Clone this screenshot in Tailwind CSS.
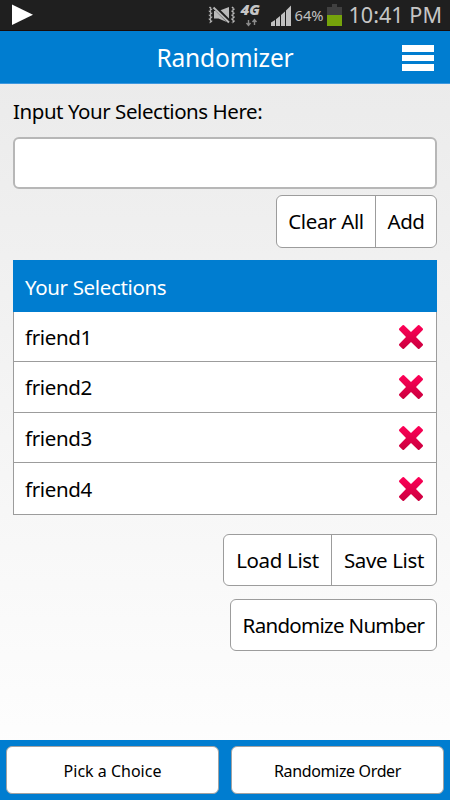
<!DOCTYPE html>
<html lang="en">
<head>
<meta charset="utf-8">
<title>Randomizer</title>
<script src="https://cdn.jsdelivr.net/npm/@tailwindcss/browser@4"></script>
</head>
<body class="w-[450px] h-[800px] overflow-hidden flex flex-col font-['Noto_Sans',sans-serif] text-black text-[20.5px] leading-[26px] tracking-[-0.35px] bg-linear-to-b from-[#e9e9e9] to-white">
<div class="h-[31px] shrink-0 bg-[#1f1f1f] border-b border-[#190b08] flex items-start tracking-normal">
  <svg class="w-[450px] h-[30px] overflow-visible" viewBox="0 0 450 30">
    <path d="M12 4.500V25L33 14.700z" fill="#fff"/>
    <path d="M209.500 7l2 2-2 2 2 2-2 2 2 2-2 2 2 2-2 2M232 7l2 2-2 2 2 2-2 2 2 2-2 2 2 2-2 2" fill="none" stroke="#b9b9b9" stroke-width="1.500" stroke-dasharray="2.200 .6"/>
    <path d="M214 11h4.500l10.500-4v16l-10.500-4.500H214z" fill="#b9b9b9"/>
    <path d="M214 6.500L230 22.500" stroke="#1f1f1f" stroke-width="4"/>
    <path d="M213.500 7.500L229 22.500" stroke="#b9b9b9" stroke-width="1.900"/>
    <text x="240.500" y="14.500" font-family="Open Sans, sans-serif" font-size="14.500" font-weight="800" font-style="italic" fill="#c6c6c6" textLength="19.500" lengthAdjust="spacingAndGlyphs">4G</text>
    <path d="M248.500 20v5M246.500 23l2 2.500 2-2.500M254.500 25v-5M252.500 22l2-2.500 2 2.500" fill="none" stroke="#8b8b8b" stroke-width="1.400"/>
    <path d="M271 22.500l4-2.500v6h-4zM276 19.300l4-3.300v10h-4zM281 15l4-3.500V26h-4zM286 10.500l5-5V26h-5z" fill="#c1c1c1"/>
    <text x="294.500" y="21" font-family="Noto Sans, sans-serif" font-size="14.500" fill="#c1c1c1" textLength="29" lengthAdjust="spacingAndGlyphs">64%</text>
    <path d="M332 4h5v3h5v8h-15V7h5z" fill="#404040"/>
    <path d="M327 15h15v11h-15z" fill="#75a30b"/>
    <text x="348.500" y="22.500" font-family="Noto Sans, sans-serif" font-size="21" fill="#c6c6c6" textLength="93.500" lengthAdjust="spacingAndGlyphs">10:41 PM</text>
  </svg>
</div>
<header class="h-[53px] shrink-0 bg-[#007dd0] border-b border-[#3d98df] text-white grid grid-cols-[50px_1fr_50px] items-center">
  <span></span>
  <h1 class="text-center text-[24.5px] tracking-[-0.150px] pt-[2px]">Randomizer</h1>
  <button class="flex flex-col gap-[3px] w-8 ml-[2px] pt-px" aria-label="Menu"><span class="h-[7px] w-8 bg-white"></span><span class="h-[6px] w-8 bg-white"></span><span class="h-[7px] w-8 bg-white"></span></button>
</header>
<main class="flex-1 px-[13px] pt-[14px] flex flex-col items-end">
  <label for="selection" class="self-start h-[39px] tracking-[-0.450px]">Input Your Selections Here:</label>
  <input id="selection" class="block w-full h-[52px] shrink-0 rounded-[6px] border-2 border-[#b7b7b7] bg-white px-3">
  <div class="mt-[6px] h-[53px] flex bg-white border border-[#9c9c9c] rounded-[6px] overflow-hidden">
    <button class="w-[99px] border-r border-[#9c9c9c] pb-px">Clear All</button><button class="w-[60px] tracking-[-0.500px] pb-px">Add</button>
  </div>
  <section class="w-full mt-3 bg-white">
    <h2 class="h-[52px] pl-3 flex items-center bg-[#007dd0] text-white pt-px">Your Selections</h2>
    <ul class="border-x border-b border-[#9c9c9c]">
      <li class="h-[50px] border-b border-[#9c9c9c] flex justify-between items-center pl-[11px] pr-3"><span>friend1</span><svg width="26" height="26" viewBox="0 0 26 26"><use href="#cross"/></svg></li>
      <li class="h-[51px] border-b border-[#9c9c9c] flex justify-between items-center pl-[11px] pr-3"><span>friend2</span><svg width="26" height="26" viewBox="0 0 26 26"><use href="#cross"/></svg></li>
      <li class="h-[50px] border-b border-[#9c9c9c] flex justify-between items-center pl-[11px] pr-3"><span>friend3</span><svg width="26" height="26" viewBox="0 0 26 26"><use href="#cross"/></svg></li>
      <li class="h-[51px] flex justify-between items-center pl-[11px] pr-3"><span>friend4</span><svg width="26" height="26" viewBox="0 0 26 26"><use href="#cross"/></svg></li>
    </ul>
  </section>
  <div class="mt-[19px] h-[52px] flex bg-white border border-[#9c9c9c] rounded-[6px] overflow-hidden">
    <button class="w-[108px] border-r border-[#9c9c9c]">Load List</button><button class="w-[104px]">Save List</button>
  </div>
  <button class="mt-[13px] w-[207px] h-[52px] bg-white border border-[#9c9c9c] rounded-[6px] tracking-[-0.700px]">Randomize Number</button>
</main>
<footer class="h-[60px] shrink-0 bg-[#007dd0] pt-[6px] px-[6px] flex gap-3 text-[16px]">
  <button class="flex-1 h-[48px] bg-white border border-[#a2a2a2] rounded-[6px] pt-[2px] tracking-normal">Pick a Choice</button>
  <button class="flex-1 h-[48px] bg-white border border-[#a2a2a2] rounded-[6px] pt-[2px] tracking-[-0.350px]">Randomize Order</button>
</footer>
<svg class="absolute w-0 h-0"><defs>
  <linearGradient id="red" x1="0" y1="0" x2="0" y2="1"><stop offset="0" stop-color="#ff0057"/><stop offset="1" stop-color="#c9003e"/></linearGradient>
  <path id="cross" fill="url(#red)" d="M6 1.200L13 8l7-6.800q.7-.5 1.400 0l3.400 3.400q.5.700 0 1.400L18 13l6.800 7q.5.700 0 1.400l-3.400 3.400q-.7.500-1.400 0L13 18l-7 6.800q-.7.500-1.400 0l-3.400-3.400q-.5-.7 0-1.400L8 13 1.200 6q-.5-.7 0-1.400l3.400-3.400q.7-.5 1.400 0z"/>
</defs></svg>
</body>
</html>
